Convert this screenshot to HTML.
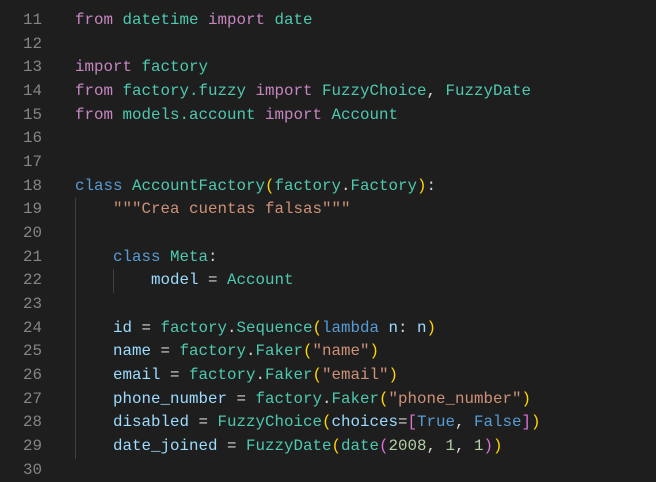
<!DOCTYPE html>
<html><head><style>
body{margin:0;background:#1e1e1e;width:656px;height:478px;overflow:hidden;font-family:"Liberation Mono",monospace;font-size:15.83px;}
.w{position:absolute;top:9px;left:0;}
.l{height:23.68px;line-height:23.68px;white-space:pre;position:relative;}
.n{position:absolute;left:0;width:42px;text-align:right;color:#858585;}
.c{position:absolute;left:75px;color:#d4d4d4;}
.g{position:absolute;top:0;width:1px;height:23.68px;background:#404040;}
.k{color:#c586c0}.b{color:#569cd6}.t{color:#4ec9b0}.v{color:#9cdcfe}.s{color:#ce9178}.y{color:#ffd700}.p{color:#da70d6}.q{color:#179fff}.m{color:#b5cea8}.f{color:#dcdcaa}
</style></head><body><div class="w">
<div class="l"><span class="n">11</span><span class="c"><span class="k">from</span> <span class="t">datetime</span> <span class="k">import</span> <span class="t">date</span></span></div>
<div class="l"><span class="n">12</span></div>
<div class="l"><span class="n">13</span><span class="c"><span class="k">import</span> <span class="t">factory</span></span></div>
<div class="l"><span class="n">14</span><span class="c"><span class="k">from</span> <span class="t">factory.fuzzy</span> <span class="k">import</span> <span class="t">FuzzyChoice</span>, <span class="t">FuzzyDate</span></span></div>
<div class="l"><span class="n">15</span><span class="c"><span class="k">from</span> <span class="t">models.account</span> <span class="k">import</span> <span class="t">Account</span></span></div>
<div class="l"><span class="n">16</span></div>
<div class="l"><span class="n">17</span></div>
<div class="l"><span class="n">18</span><span class="c"><span class="b">class</span> <span class="t">AccountFactory</span><span class="y">(</span><span class="t">factory</span>.<span class="t">Factory</span><span class="y">)</span>:</span></div>
<div class="l"><span class="n">19</span><span class="g" style="left:75px"></span><span class="c">    <span class="s">"""Crea cuentas falsas"""</span></span></div>
<div class="l"><span class="n">20</span><span class="g" style="left:75px"></span></div>
<div class="l"><span class="n">21</span><span class="g" style="left:75px"></span><span class="c">    <span class="b">class</span> <span class="t">Meta</span>:</span></div>
<div class="l"><span class="n">22</span><span class="g" style="left:75px"></span><span class="g" style="left:113px"></span><span class="c">        <span class="v">model</span> = <span class="t">Account</span></span></div>
<div class="l"><span class="n">23</span><span class="g" style="left:75px"></span></div>
<div class="l"><span class="n">24</span><span class="g" style="left:75px"></span><span class="c">    <span class="v">id</span> = <span class="t">factory</span>.<span class="t">Sequence</span><span class="y">(</span><span class="b">lambda</span> <span class="v">n</span>: <span class="v">n</span><span class="y">)</span></span></div>
<div class="l"><span class="n">25</span><span class="g" style="left:75px"></span><span class="c">    <span class="v">name</span> = <span class="t">factory</span>.<span class="t">Faker</span><span class="y">(</span><span class="s">"name"</span><span class="y">)</span></span></div>
<div class="l"><span class="n">26</span><span class="g" style="left:75px"></span><span class="c">    <span class="v">email</span> = <span class="t">factory</span>.<span class="t">Faker</span><span class="y">(</span><span class="s">"email"</span><span class="y">)</span></span></div>
<div class="l"><span class="n">27</span><span class="g" style="left:75px"></span><span class="c">    <span class="v">phone_number</span> = <span class="t">factory</span>.<span class="t">Faker</span><span class="y">(</span><span class="s">"phone_number"</span><span class="y">)</span></span></div>
<div class="l"><span class="n">28</span><span class="g" style="left:75px"></span><span class="c">    <span class="v">disabled</span> = <span class="t">FuzzyChoice</span><span class="y">(</span><span class="v">choices</span>=<span class="p">[</span><span class="b">True</span>, <span class="b">False</span><span class="p">]</span><span class="y">)</span></span></div>
<div class="l"><span class="n">29</span><span class="g" style="left:75px"></span><span class="c">    <span class="v">date_joined</span> = <span class="t">FuzzyDate</span><span class="y">(</span><span class="t">date</span><span class="p">(</span><span class="m">2008</span>, <span class="m">1</span>, <span class="m">1</span><span class="p">)</span><span class="y">)</span></span></div>
<div class="l"><span class="n">30</span></div>
</div></body></html>
